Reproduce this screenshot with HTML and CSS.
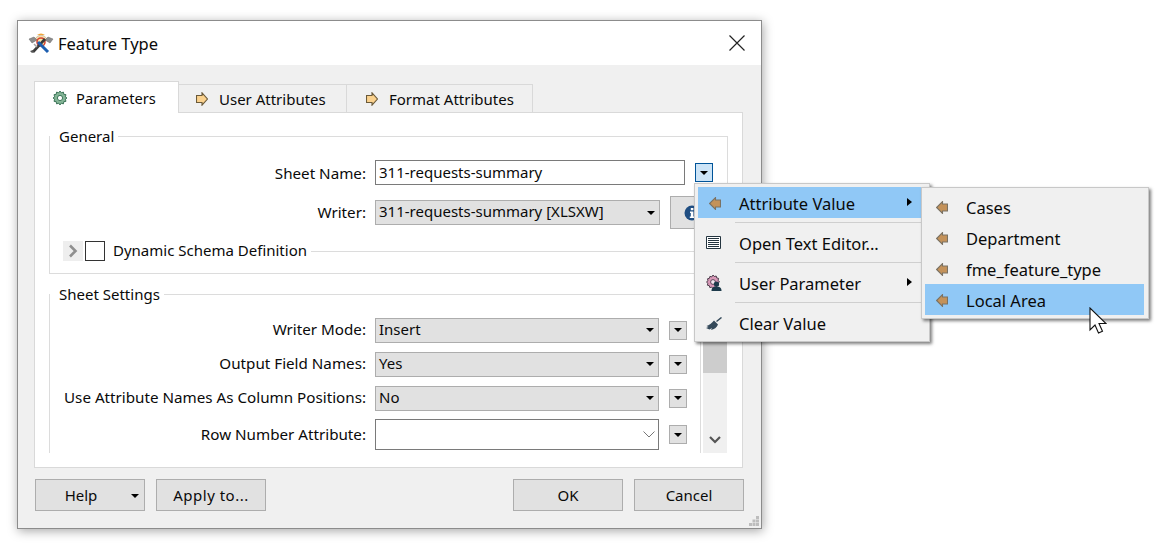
FILE: index.html
```html
<!DOCTYPE html>
<html lang="en">
<head>
<meta charset="utf-8">
<title>Feature Type</title>
<link rel="stylesheet" href="styles.css">
</head>
<body>
<svg class="defs" width="0" height="0" aria-hidden="true">
  <symbol id="tag-right" viewBox="0 0 12 14"><path d="M.5 3.500H6V.8L11.500 7 6 13.200V10.500H.5z" fill="#fbd28e" stroke="#6b5a3a" stroke-width="1.100"/></symbol>
  <symbol id="tag-left" viewBox="0 0 12 13"><path d="M11.500 3H6.500V.6L.6 6.500l5.900 5.900V10H11.500z" fill="#c4925a" stroke="#7a7264" stroke-width="1.100"/></symbol>
  <symbol id="caret" viewBox="0 0 8 4"><path d="M0 0h8L4 4z" fill="#000"/></symbol>
</svg>

<div class="dialog">
  <header class="titlebar">
    <svg class="app-icon" viewBox="0 0 26 24">
      <path d="M6 9Q13 -1 20 9z" fill="#f6dfae" stroke="#c2b8a4" stroke-width=".8"/>
      <path d="M9 4Q13 1 17 4z" fill="#f0a63a"/>
      <path d="M1 8l5-2 3 3-5 3zM25 8l-5-2-3 3 5 3z" fill="#8d8d8d" stroke="#666" stroke-width=".5"/>
      <circle cx="13" cy="11" r="4" fill="#f8e7a8" stroke="#d8452f" stroke-width="1.600"/>
      <path d="M17 8L5 21" stroke="#3a3a3a" stroke-width="2.600"/>
      <path d="M4 22l-2-2 3-1 1 2z" fill="#555"/>
      <path d="M10 11l10 10" stroke="#1d5fb0" stroke-width="3"/>
      <path d="M6 13l3 3" stroke="#a5a5a5" stroke-width="1.500"/>
    </svg>
    <span class="title">Feature Type</span>
    <svg class="close" viewBox="0 0 16 16"><path d="M.5.5l15 15M15.500.5l-15 15" stroke="#222" stroke-width="1.200" fill="none"/></svg>
  </header>

  <div class="content">
    <div class="tabs">
      <div class="tab tab-active">
        <svg class="tab-icon" viewBox="0 0 16 16"><path d="M8 1l1.300 1.800 2.100-.7.400 2.200 2.200.4-.7 2.100L15 8l-1.700 1.200.7 2.100-2.200.4-.4 2.200-2.100-.7L8 15l-1.300-1.800-2.100.7-.4-2.200-2.200-.4.700-2.100L1 8l1.700-1.200-.7-2.100 2.200-.4.400-2.200 2.100.7z" fill="#84b596" stroke="#2f6a4d" stroke-width=".9"/><circle cx="8" cy="8" r="2.600" fill="#fff" stroke="#2f6a4d" stroke-width=".9"/></svg>
        Parameters
      </div>
      <div class="tab tab-user"><svg class="tab-icon"><use href="#tag-right"/></svg>User Attributes</div>
      <div class="tab tab-format"><svg class="tab-icon"><use href="#tag-right"/></svg>Format Attributes</div>
    </div>

    <div class="pane">
      <fieldset class="group group-general">
        <legend>General</legend>
        <div class="row row-sheet">
          <label class="label">Sheet Name:</label>
          <div class="input">311-requests-summary</div>
          <button class="mini mini-hot"><svg class="caret"><use href="#caret"/></svg></button>
        </div>
        <div class="row row-writer">
          <label class="label">Writer:</label>
          <div class="combo combo-grey">311-requests-summary [XLSXW]<svg class="caret"><use href="#caret"/></svg></div>
          <button class="info-btn"><svg class="info" viewBox="0 0 16 16"><circle cx="8" cy="8" r="7.500" fill="#1f4e82"/><path d="M6.800 3h2.600v2.200H6.800zM6 6.500h3.400v5H10.500v1.500H5.800v-1.500h1v-3.500H6z" fill="#fff"/></svg></button>
        </div>
        <div class="row row-dynamic">
          <span class="expander"><svg viewBox="0 0 10 14" class="chev"><path d="M2 1.500L7.500 7 2 12.500" fill="none" stroke="#8f8f8f" stroke-width="2.600"/></svg></span>
          <span class="checkbox"></span>
          <span class="dyn-label">Dynamic Schema Definition</span>
          <span class="dyn-line"></span>
        </div>
      </fieldset>

      <div class="lower">
        <fieldset class="group group-sheet">
          <legend>Sheet Settings</legend>
          <div class="row row-mode">
            <label class="label">Writer Mode:</label>
            <div class="combo combo-grey combo-wide">Insert<svg class="caret"><use href="#caret"/></svg></div>
            <button class="mini"><svg class="caret"><use href="#caret"/></svg></button>
          </div>
          <div class="row row-mode">
            <label class="label">Output Field Names:</label>
            <div class="combo combo-grey combo-wide">Yes<svg class="caret"><use href="#caret"/></svg></div>
            <button class="mini"><svg class="caret"><use href="#caret"/></svg></button>
          </div>
          <div class="row row-mode">
            <label class="label">Use Attribute Names As Column Positions:</label>
            <div class="combo combo-grey combo-wide">No<svg class="caret"><use href="#caret"/></svg></div>
            <button class="mini"><svg class="caret"><use href="#caret"/></svg></button>
          </div>
          <div class="row row-number">
            <label class="label">Row Number Attribute:</label>
            <div class="combo combo-white combo-wide"><svg class="combo-chev" viewBox="0 0 12 7"><path d="M.5.500L6 6 11.500.500" fill="none" stroke="#777" stroke-width="1"/></svg></div>
            <button class="mini"><svg class="caret"><use href="#caret"/></svg></button>
          </div>
        </fieldset>
        <div class="scrollbar">
          <div class="thumb"></div>
          <svg class="scroll-chev" viewBox="0 0 12 8"><path d="M1 1l5 5 5-5" fill="none" stroke="#555" stroke-width="2.200"/></svg>
        </div>
      </div>
    </div>

    <footer class="footer">
      <button class="btn btn-help">Help<svg class="caret help-caret"><use href="#caret"/></svg></button>
      <button class="btn btn-apply">Apply to...</button>
      <span class="spacer"></span>
      <button class="btn">OK</button>
      <button class="btn">Cancel</button>
    </footer>
    <svg class="grip" viewBox="0 0 10 10"><path d="M7 0h3v3H7zM3.500 3.500h3v3h-3zM7 3.500h3v3H7zM0 7h3v3H0zM3.500 7h3v3h-3zM7 7h3v3H7z" fill="#bdbdbd"/></svg>
  </div>
</div>

<nav class="menu menu-main">
  <div class="item item-hot"><svg class="item-icon"><use href="#tag-left"/></svg><span>Attribute Value</span><i class="sub-arrow"></i></div>
  <hr class="sep">
  <div class="item"><svg class="item-icon icon-editor" viewBox="0 0 15 13"><path d="M.5.500h14v12H.500z" fill="#fff" stroke="#24343f"/><path d="M2 2.500h11M2 4.500h11M2 6.500h11M2 8.500h11M2 10.500h11" stroke="#24343f" stroke-width="1"/></svg><span>Open Text Editor...</span></div>
  <hr class="sep">
  <div class="item"><svg class="item-icon icon-user" viewBox="0 0 16 16"><path d="M7 0l1.300 1.500 1.900-.5.500 1.900 1.900.5-.5 1.900L13.500 7 12 8.300l.5 1.900-1.900.5-.5 1.900-1.900-.5L7 13.500l-1.300-1.400-1.900.5-.5-1.900-1.900-.5.500-1.900L.500 7 2 5.700l-.5-1.900 1.900-.5.500-1.900 1.900.5z" fill="#d999b8" stroke="#3c2c3c" stroke-width=".9"/><circle cx="7" cy="7" r="2.400" fill="#f3e6ee" stroke="#3c2c3c" stroke-width=".8"/><circle cx="10.500" cy="9" r="2.600" fill="#1d3a4a"/><path d="M5.500 16c0-3.500 2-4.500 5-4.500s5 1 5 4.500z" fill="#1d3a4a"/></svg><span>User Parameter</span><i class="sub-arrow"></i></div>
  <hr class="sep">
  <div class="item"><svg class="item-icon icon-broom" viewBox="0 0 16 14"><path d="M15.500.500l-5 4" stroke="#34495a" stroke-width="1.500" fill="none"/><path d="M8 3.500l4 4c-1 3-4 5-7 5.500l1-2-2.500 1.500L0 11l2.500-1L.500 9C3 8.500 6 6 8 3.500z" fill="#34495a"/></svg><span>Clear Value</span></div>
</nav>

<nav class="menu menu-sub">
  <div class="sub-item"><svg class="item-icon"><use href="#tag-left"/></svg>Cases</div>
  <div class="sub-item"><svg class="item-icon"><use href="#tag-left"/></svg>Department</div>
  <div class="sub-item"><svg class="item-icon"><use href="#tag-left"/></svg>fme_feature_type</div>
  <div class="sub-item item-hot"><svg class="item-icon"><use href="#tag-left"/></svg>Local Area</div>
</nav>

<svg class="cursor" viewBox="0 0 18 28"><path d="M1 1v22l5-5 3.500 8 4-1.800L10 16.500h7z" fill="#fff" stroke="#111" stroke-width="1.100"/></svg>
</body>
</html>
```
FILE: styles.css
```css
* { box-sizing: border-box; }
html, body { margin: 0; height: 100%; background: #fff; overflow: hidden; }
body {
  padding: 20px 0 0 17px;
  font-family: "Noto Sans", "Open Sans", sans-serif;
  font-size: 15px;
  color: #0a0a0a;
  position: relative;
}
.defs { position: absolute; }

.dialog {
  width: 745px;
  height: 509px;
  border: 1px solid #8c8c8c;
  background: #f0f0f0;
  box-shadow: 1px 2px 10px rgba(0, 0, 0, .35);
  display: flex;
  flex-direction: column;
}
.titlebar {
  height: 44px;
  background: #fff;
  display: flex;
  align-items: center;
  padding: 0 16px 0 10px;
  flex: none;
}
.app-icon { width: 26px; height: 24px; margin-right: 4px; }
.title { font-size: 16.500px; flex: 1; padding-top: 1px; }
.close { width: 16px; height: 16px; }

.content { position: relative; flex: 1; padding: 17px 17px 0 16px; display: flex; flex-direction: column; }

.tabs { display: flex; align-items: flex-end; height: 31px; position: relative; z-index: 1; margin-bottom: -1px; }
.tab {
  display: flex;
  align-items: center;
  height: 29px;
  background: #f0f0f0;
  border: 1px solid #d9d9d9;
  border-left: 0;
  padding-left: 18px;
}
.tab-active {
  height: 32px;
  width: 145px;
  background: #fff;
  border-left: 1px solid #d9d9d9;
  border-bottom: 0;
  padding-left: 17px;
  font-size: 14.700px;
}
.tab-user { width: 168px; padding-left: 17px; }
.tab-format { width: 186px; padding-left: 19px; }
.tab-icon { width: 12px; height: 14px; margin-right: 11px; flex: none; }
.tab-active .tab-icon { width: 16px; height: 16px; margin-right: 8px; }

.pane {
  width: 709px;
  height: 356px;
  flex: none;
  background: #fff;
  border: 1px solid #d9d9d9;
  padding: 15px 15px 14px 14px;
  display: flex;
  flex-direction: column;
}

.group { margin: 0; padding: 0; border: 1px solid #dcdcdc; min-width: 0; }
.group legend { padding: 0 4px 0 9px; margin-left: 0; line-height: 20px; height: 20px; font-size: 15px; }
.group-general { height: 148px; width: 679px; flex: none; margin-top: -2px; }
.lower { display: flex; flex: 1; min-height: 0; margin-top: 10px; }
.group-sheet { flex: 1; border-bottom: 0; }

.row { display: flex; align-items: center; }
.label { width: 316px; text-align: right; flex: none; margin-right: 9px; white-space: nowrap; font-size: 15.200px; padding-bottom: 2px; }
.row-sheet .label { padding-bottom: 0; }
.row-sheet { height: 25px; margin-top: 14px; }
.row-writer { height: 33px; margin-top: 11px; }
.row-dynamic { height: 22px; margin-top: 11px; padding-left: 13px; }
.row-mode { height: 26px; margin-bottom: 8px; }
.row-mode:first-of-type { margin-top: 13px; }
.row-number { height: 31px; }

.input {
  width: 310px;
  height: 25px;
  border: 1px solid #7a7a7a;
  line-height: 23px;
  padding-left: 3px;
  background: #fff;
}
.combo {
  height: 25px;
  border: 1px solid #adadad;
  line-height: 21px;
  padding: 0 0 2px 3px;
  width: 285px;
  flex: none;
  display: flex;
  align-items: center;
  justify-content: space-between;
}
.combo-wide { width: 284px; }
.combo-grey { background: #e1e1e1; }
.combo-grey .caret { margin: 2px 4px 0 0; }
.combo-white { background: #fff; border-color: #7a7a7a; height: 31px; justify-content: flex-end; padding-bottom: 0; }
.combo-chev { width: 12px; height: 7px; margin-right: 3px; }
.caret { width: 8px; height: 4px; flex: none; display: block; }

.mini {
  width: 18px;
  height: 19px;
  padding: 0;
  margin-left: 10px;
  border: 1px solid #adadad;
  background: #e1e1e1;
  display: flex;
  align-items: center;
  justify-content: center;
  flex: none;
}
.mini-hot { background: #cce4f7; border-color: #005499; }
.info-btn {
  width: 60px;
  height: 33px;
  margin-left: 10px;
  padding: 0 0 0 13px;
  border: 1px solid #adadad;
  background: #e1e1e1;
  display: flex;
  align-items: center;
}
.info { width: 16px; height: 16px; }

.expander { width: 20px; height: 20px; background: #eee; display: flex; align-items: center; justify-content: center; margin-right: 2px; }
.chev { width: 10px; height: 14px; }
.checkbox { width: 20px; height: 20px; border: 1px solid #333; background: #fff; margin-right: 8px; }
.dyn-label { white-space: nowrap; margin-right: 4px; padding-bottom: 2px; }
.dyn-line { flex: 1; height: 1px; background: #dcdcdc; margin-right: 7px; }

.scrollbar {
  width: 24px;
  margin-left: 2px;
  background: #f0f0f0;
  position: relative;
  flex: none;
  display: flex;
  flex-direction: column;
  align-items: center;
  justify-content: flex-end;
  padding-bottom: 9px;
}
.thumb { position: absolute; top: 39px; left: 0; width: 24px; height: 50px; background: #cdcdcd; }
.scroll-chev { width: 12px; height: 8px; }

.footer { display: flex; gap: 11px; margin: 11px 0 0 1px; width: 709px; }
.spacer { flex: 1; }
.btn {
  width: 110px;
  height: 32px;
  border: 1px solid #adadad;
  background: #e1e1e1;
  font: inherit;
  color: inherit;
  padding: 0;
  position: relative;
}
.btn-apply { letter-spacing: .5px; }
.help-caret { position: absolute; right: 5px; top: 14px; }
.btn-help { padding-right: 18px; }
.grip { position: absolute; right: 2px; bottom: 2px; width: 10px; height: 10px; }

.menu {
  position: absolute;
  background: #f0f0f0;
  border: 1px solid #c8c8c8;
  box-shadow: 2px 2px 3px rgba(0, 0, 0, .5);
  font-size: 16.500px;
}
.menu-main { left: 694px; top: 183px; width: 236px; height: 159px; padding: 3px; z-index: 2; }
.menu-sub { left: 921px; top: 187px; width: 228px; height: 132px; padding: 3px 4px 3px 3px; z-index: 3; }
.item, .sub-item {
  height: 31px;
  display: flex;
  align-items: center;
  padding: 2px 0 0 41px;
  position: relative;
}
.item-hot { background: #90c8f6; }
.item-icon { position: absolute; left: 11px; top: 10px; width: 12px; height: 13px; }
.item .icon-editor { left: 8px; top: 9px; width: 15px; height: 13px; }
.item .icon-user { left: 8px; top: 8px; width: 16px; height: 16px; }
.item .icon-broom { left: 8px; top: 10px; width: 16px; height: 14px; }
.sep { border: 0; height: 1px; background: #cfcfcf; margin: 4px 0 4px 37px; }
.sub-arrow {
  position: absolute;
  right: 14px;
  top: 11px;
  border-left: 5px solid #000;
  border-top: 4px solid transparent;
  border-bottom: 4px solid transparent;
}
.cursor { position: absolute; left: 1089px; top: 307px; width: 18px; height: 28px; z-index: 4; }
```
